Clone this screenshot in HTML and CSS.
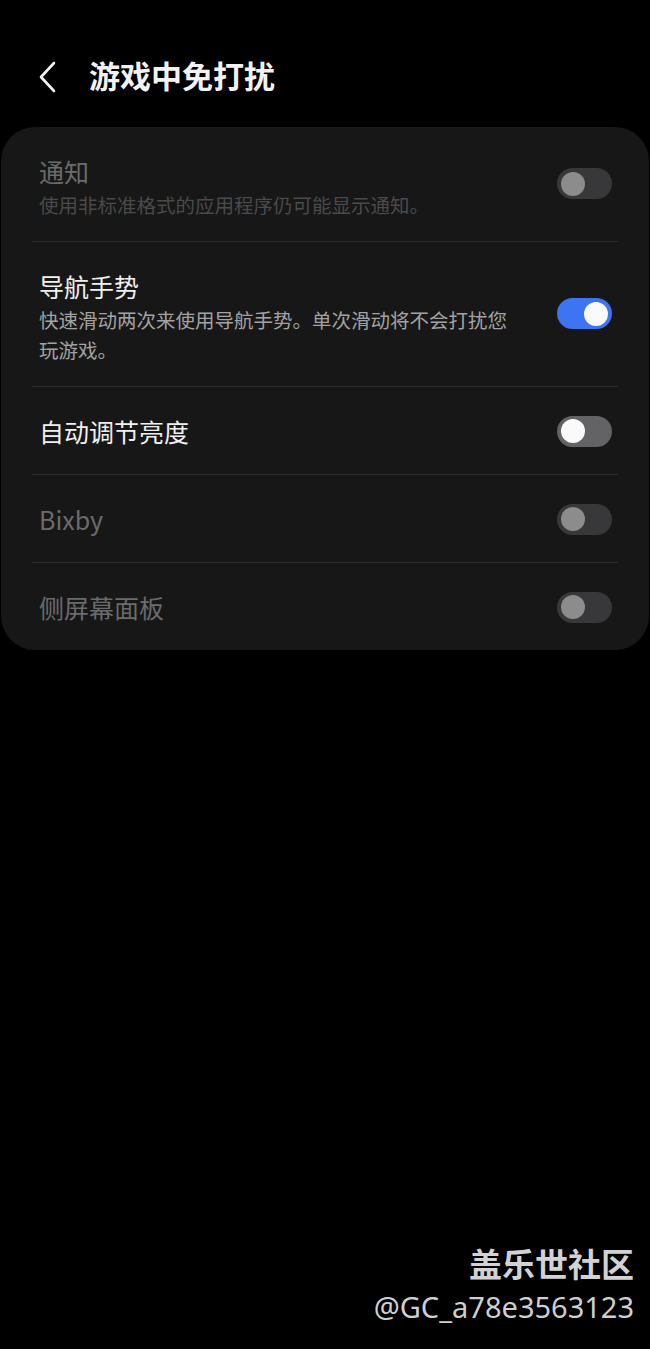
FILE: index.html
```html
<!DOCTYPE html>
<html lang="zh-CN">
<head>
    <meta charset="UTF-8">
    <meta name="viewport" content="width=device-width, initial-scale=1.0">
    <title>游戏中免打扰</title>
    <link rel="stylesheet" href="styles.css">
</head>
<body>
    <div class="header">
        <svg class="back" width="24" height="34" viewBox="0 0 24 34">
            <path d="M17 3 L4 17 L17 31" fill="none" stroke="#f2f2f2" stroke-width="2.6" stroke-linecap="round" stroke-linejoin="round"/>
        </svg>
        <h1>游戏中免打扰</h1>
    </div>

    <div class="card">
        <div class="row disabled">
            <div class="text">
                <div class="title">通知</div>
                <div class="sub">使用非标准格式的应用程序仍可能显示通知。</div>
            </div>
            <div class="switch"><span class="knob"></span></div>
        </div>
        <div class="row">
            <div class="text">
                <div class="title">导航手势</div>
                <div class="sub">快速滑动两次来使用导航手势。单次滑动将不会打扰您玩游戏。</div>
            </div>
            <div class="switch on"><span class="knob"></span></div>
        </div>
        <div class="row single">
            <div class="text">
                <div class="title">自动调节亮度</div>
            </div>
            <div class="switch"><span class="knob"></span></div>
        </div>
        <div class="row single disabled">
            <div class="text">
                <div class="title">Bixby</div>
            </div>
            <div class="switch"><span class="knob"></span></div>
        </div>
        <div class="row single disabled">
            <div class="text">
                <div class="title">侧屏幕面板</div>
            </div>
            <div class="switch"><span class="knob"></span></div>
        </div>
    </div>

    <div class="watermark">
        <div class="brand">盖乐世社区</div>
        <div class="user">@GC_a78e3563123</div>
    </div>
</body>
</html>
```

FILE: styles.css
```css
body {
    font-family: "Noto Sans CJK SC", "Noto Sans", sans-serif;
    background-color: #000;
    color: #f2f2f2;
    margin: 0;
    width: 650px;
    height: 1349px;
    position: relative;
    overflow: hidden;
}
.header {
    display: flex;
    align-items: center;
    height: 60px;
    padding: 47px 0 0 37px;
}
.back {
    margin-right: 28px;
}
h1 {
    font-size: 31px;
    font-weight: 700;
    margin: 0;
    line-height: 40px;
    margin-top: -5px;
}
.card {
    background: #171717;
    margin: 20px 1px 0;
    border-radius: 34px;
    padding: 0 31px;
}
.row {
    display: flex;
    align-items: center;
    justify-content: space-between;
    padding: 27px 7px 21px;
    border-bottom: 1px solid #2c2c2c;
}
.row:last-child {
    border-bottom: none;
}
.row.single {
    padding: 27px 7px 26px;
}
.text {
    width: 480px;
}
.title {
    font-size: 25px;
    line-height: 34px;
    color: #f0f0f0;
}
.sub {
    font-size: 19.5px;
    line-height: 30px;
    margin-top: 2px;
    color: #a3a3a3;
}
.disabled .title {
    color: #6b6b6b;
}
.disabled .sub {
    color: #4a4a4a;
}
.switch {
    width: 55px;
    height: 31px;
    border-radius: 16px;
    background: #636366;
    display: flex;
    align-items: center;
    padding: 0 4px;
    box-sizing: border-box;
    margin-right: -1px;
    margin-bottom: 7px;
}
.row.single .switch {
    margin-bottom: 0;
}
.knob {
    width: 24px;
    height: 24px;
    border-radius: 50%;
    background: #fafafa;
}
.disabled .switch {
    background: #38383a;
}
.disabled .knob {
    background: #8c8c8c;
}
.switch.on {
    background: #3d74f2;
    justify-content: flex-end;
}
.watermark {
    position: absolute;
    right: 16px;
    top: 1241px;
    text-align: right;
    color: #d2d2d2;
}
.brand {
    font-size: 33px;
    font-weight: 700;
    line-height: 44px;
}
.user {
    font-family: "Noto Sans", sans-serif;
    font-size: 29px;
    line-height: 44px;
    color: #cfcfcf;
}
```
